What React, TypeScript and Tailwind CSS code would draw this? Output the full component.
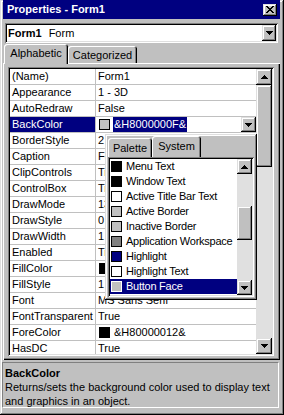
import type { ReactNode } from 'react';

const raised =
  'shadow-[inset_-1px_-1px_#000,inset_1px_1px_#dfdfdf,inset_-2px_-2px_#808080,inset_2px_2px_#fff]';
const sunken =
  'shadow-[inset_1px_1px_#808080,inset_-1px_-1px_#fff,inset_2px_2px_#000,inset_-2px_-2px_#dfdfdf]';

type Prop = { name: string; value: string; swatch?: string; selected?: boolean };

const props: Prop[] = [
  { name: '(Name)', value: 'Form1' },
  { name: 'Appearance', value: '1 - 3D' },
  { name: 'AutoRedraw', value: 'False' },
  { name: 'BackColor', value: '&H8000000F&', swatch: '#c0c0c0', selected: true },
  { name: 'BorderStyle', value: '2 - Sizable' },
  { name: 'Caption', value: 'Form1' },
  { name: 'ClipControls', value: 'True' },
  { name: 'ControlBox', value: 'True' },
  { name: 'DrawMode', value: '13 - Copy Pen' },
  { name: 'DrawStyle', value: '0 - Solid' },
  { name: 'DrawWidth', value: '1' },
  { name: 'Enabled', value: 'True' },
  { name: 'FillColor', value: '&H00000000&', swatch: '#000' },
  { name: 'FillStyle', value: '1 - Transparent' },
  { name: 'Font', value: 'MS Sans Serif' },
  { name: 'FontTransparent', value: 'True' },
  { name: 'ForeColor', value: '&H80000012&', swatch: '#000' },
  { name: 'HasDC', value: 'True' },
];

const systemColors = [
  { label: 'Menu Text', color: '#000' },
  { label: 'Window Text', color: '#000' },
  { label: 'Active Title Bar Text', color: '#fff' },
  { label: 'Active Border', color: '#c0c0c0' },
  { label: 'Inactive Border', color: '#c0c0c0' },
  { label: 'Application Workspace', color: '#808080' },
  { label: 'Highlight', color: '#000080' },
  { label: 'Highlight Text', color: '#fff' },
  { label: 'Button Face', color: '#c0c0c0', selected: true },
  { label: 'Button Shadow', color: '#808080' },
];

function Arrow({ up }: { up?: boolean }) {
  return (
    <svg width="7" height="4" viewBox="0 0 7 4" shapeRendering="crispEdges">
      {up ? (
        <path d="M3 0h1v1h1v1h1v1h1v1H0V3h1V2h1V1h1z" fill="#000" />
      ) : (
        <path d="M0 0h7v1H6v1H5v1H4v1H3V3H2V2H1V1H0z" fill="#000" />
      )}
    </svg>
  );
}

function ArrowButton({ up, className }: { up?: boolean; className: string }) {
  return (
    <div className={`flex shrink-0 items-center justify-center bg-[#c0c0c0] ${raised} ${className}`}>
      <Arrow up={up} />
    </div>
  );
}

function Tab({ children, className }: { children: ReactNode; className: string }) {
  return (
    <div
      className={`flex shrink-0 items-center justify-center rounded-t-[3px] bg-[#c0c0c0] shadow-[inset_1px_1px_#fff,inset_-1px_0_#000,inset_-2px_0_#808080] ${className}`}
    >
      {children}
    </div>
  );
}

function GridRow({ prop }: { prop: Prop }) {
  return (
    <div className="flex h-[16px] shrink-0 border-b border-[#c0c0c0] leading-[15px]">
      <div
        className={`w-[86px] shrink-0 border-r border-[#c0c0c0] pl-[2px] ${prop.selected ? 'bg-[#000080] text-white' : ''}`}
      >
        {prop.name}
      </div>
      <div className="flex min-w-0 flex-1 items-center pl-[2px]">
        {prop.swatch && (
          <span className="ml-[1px] h-[11px] w-[11px] shrink-0 border border-black" style={{ background: prop.swatch }} />
        )}
        <span
          className={`whitespace-nowrap ${prop.swatch ? 'ml-[3px] px-[1px]' : ''} ${prop.selected ? 'bg-[#000080] text-white' : ''}`}
        >
          {prop.value}
        </span>
        {prop.selected && <ArrowButton className="ml-auto h-[15px] w-[15px]" />}
      </div>
    </div>
  );
}

function ColorPopup() {
  return (
    <div className={`absolute left-[105px] top-[134px] z-20 flex h-[166px] w-[152px] flex-col bg-[#c0c0c0] p-[2px] ${raised}`}>
      <div className="flex h-[21px] shrink-0 items-end pl-[1px]">
        <Tab className="h-[19px] w-[44px] pt-[1px]">Palette</Tab>
        <Tab className="h-[21px] w-[49px]">System</Tab>
      </div>
      <div className={`mx-[1px] mb-[1px] flex min-h-0 flex-1 bg-white p-[2px] ${sunken}`}>
        <div className="min-w-0 flex-1 overflow-hidden tracking-[-0.25px]">
          {systemColors.map((c) => (
            <div
              key={c.label}
              className={`flex h-[15px] items-center whitespace-nowrap ${c.selected ? 'bg-[#000080] text-white' : ''}`}
            >
              <span
                className={`ml-[1px] h-[11px] w-[11px] shrink-0 border ${c.selected ? 'border-white' : 'border-black'}`}
                style={{ background: c.color }}
              />
              <span className="ml-[4px]">{c.label}</span>
            </div>
          ))}
        </div>
        <div className="flex w-[15px] shrink-0 flex-col bg-[#e0e0e0]">
          <ArrowButton up className="h-[15px] w-[15px]" />
          <div className="h-[32px] shrink-0" />
          <div className={`h-[34px] shrink-0 bg-[#c0c0c0] ${raised}`} />
          <div className="flex-1" />
          <ArrowButton className="h-[15px] w-[15px]" />
        </div>
      </div>
    </div>
  );
}

export default function App() {
  return (
    <div
      className={`relative h-[415px] w-[284px] overflow-hidden bg-[#c0c0c0] font-['Liberation_Sans',Arial,sans-serif] text-[11px] text-black ${raised}`}
    >
      <div className="ml-[3px] flex h-[19px] w-[277px] items-center justify-between bg-[#000080] pl-[4px] pr-[3px]">
        <span className="font-bold text-white">Properties - Form1</span>
        <div className={`flex h-[12px] w-[14px] items-center justify-center bg-[#c0c0c0] ${raised}`}>
          <svg width="8" height="7" viewBox="0 0 8 7" shapeRendering="crispEdges">
            <path
              d="M0 0h2v1h1v1h2V1h1V0h2v1H7v1H6v1H5v1h1v1h1v1h1v1H6V6H5V5H3v1H2v1H0V6h1V5h1V4h1V3H2V2H1V1H0z"
              fill="#000"
            />
          </svg>
        </div>
      </div>

      <div className={`ml-[5px] mt-[4px] flex h-[20px] w-[273px] items-center bg-white p-[2px] ${sunken}`}>
        <span className="ml-[1px] font-bold">Form1</span>
        <span className="ml-[7px]">Form</span>
        <ArrowButton className="ml-auto h-[16px] w-[14px]" />
      </div>

      <div className="flex h-[20px] items-end pl-[4px]">
        <Tab className="relative z-10 -mb-[1px] h-[20px] w-[64px] pb-[1px]">Alphabetic</Tab>
        <Tab className="h-[17px] w-[69px] pt-[1px]">Categorized</Tab>
      </div>

      <div className="ml-[3px] h-[297px] w-[277px] pl-[5px] pt-[4px] shadow-[inset_1px_1px_#fff,inset_-1px_-1px_#000,inset_-2px_-2px_#808080]">
        <div className={`flex h-[289px] w-[266px] bg-white p-[2px] ${sunken}`}>
          <div className="flex min-w-0 flex-1 flex-col overflow-hidden">
            {props.map((p) => (
              <GridRow key={p.name} prop={p} />
            ))}
          </div>
          <div className="flex w-[16px] shrink-0 flex-col bg-[#e0e0e0]">
            <ArrowButton up className="h-[16px] w-[16px]" />
            <div className={`h-[82px] shrink-0 bg-[#c0c0c0] ${raised}`} />
            <div className="flex-1" />
            <ArrowButton className="h-[16px] w-[16px]" />
          </div>
        </div>
      </div>

      <div className="ml-[2px] mt-[2px] h-[46px] w-[277px] border border-b-white border-l-[#808080] border-r-white border-t-[#808080] pl-[2px] pt-[3px] leading-[14px]">
        <div className="font-bold">BackColor</div>
        <div>Returns/sets the background color used to display text and graphics in an object.</div>
      </div>

      <ColorPopup />
    </div>
  );
}
